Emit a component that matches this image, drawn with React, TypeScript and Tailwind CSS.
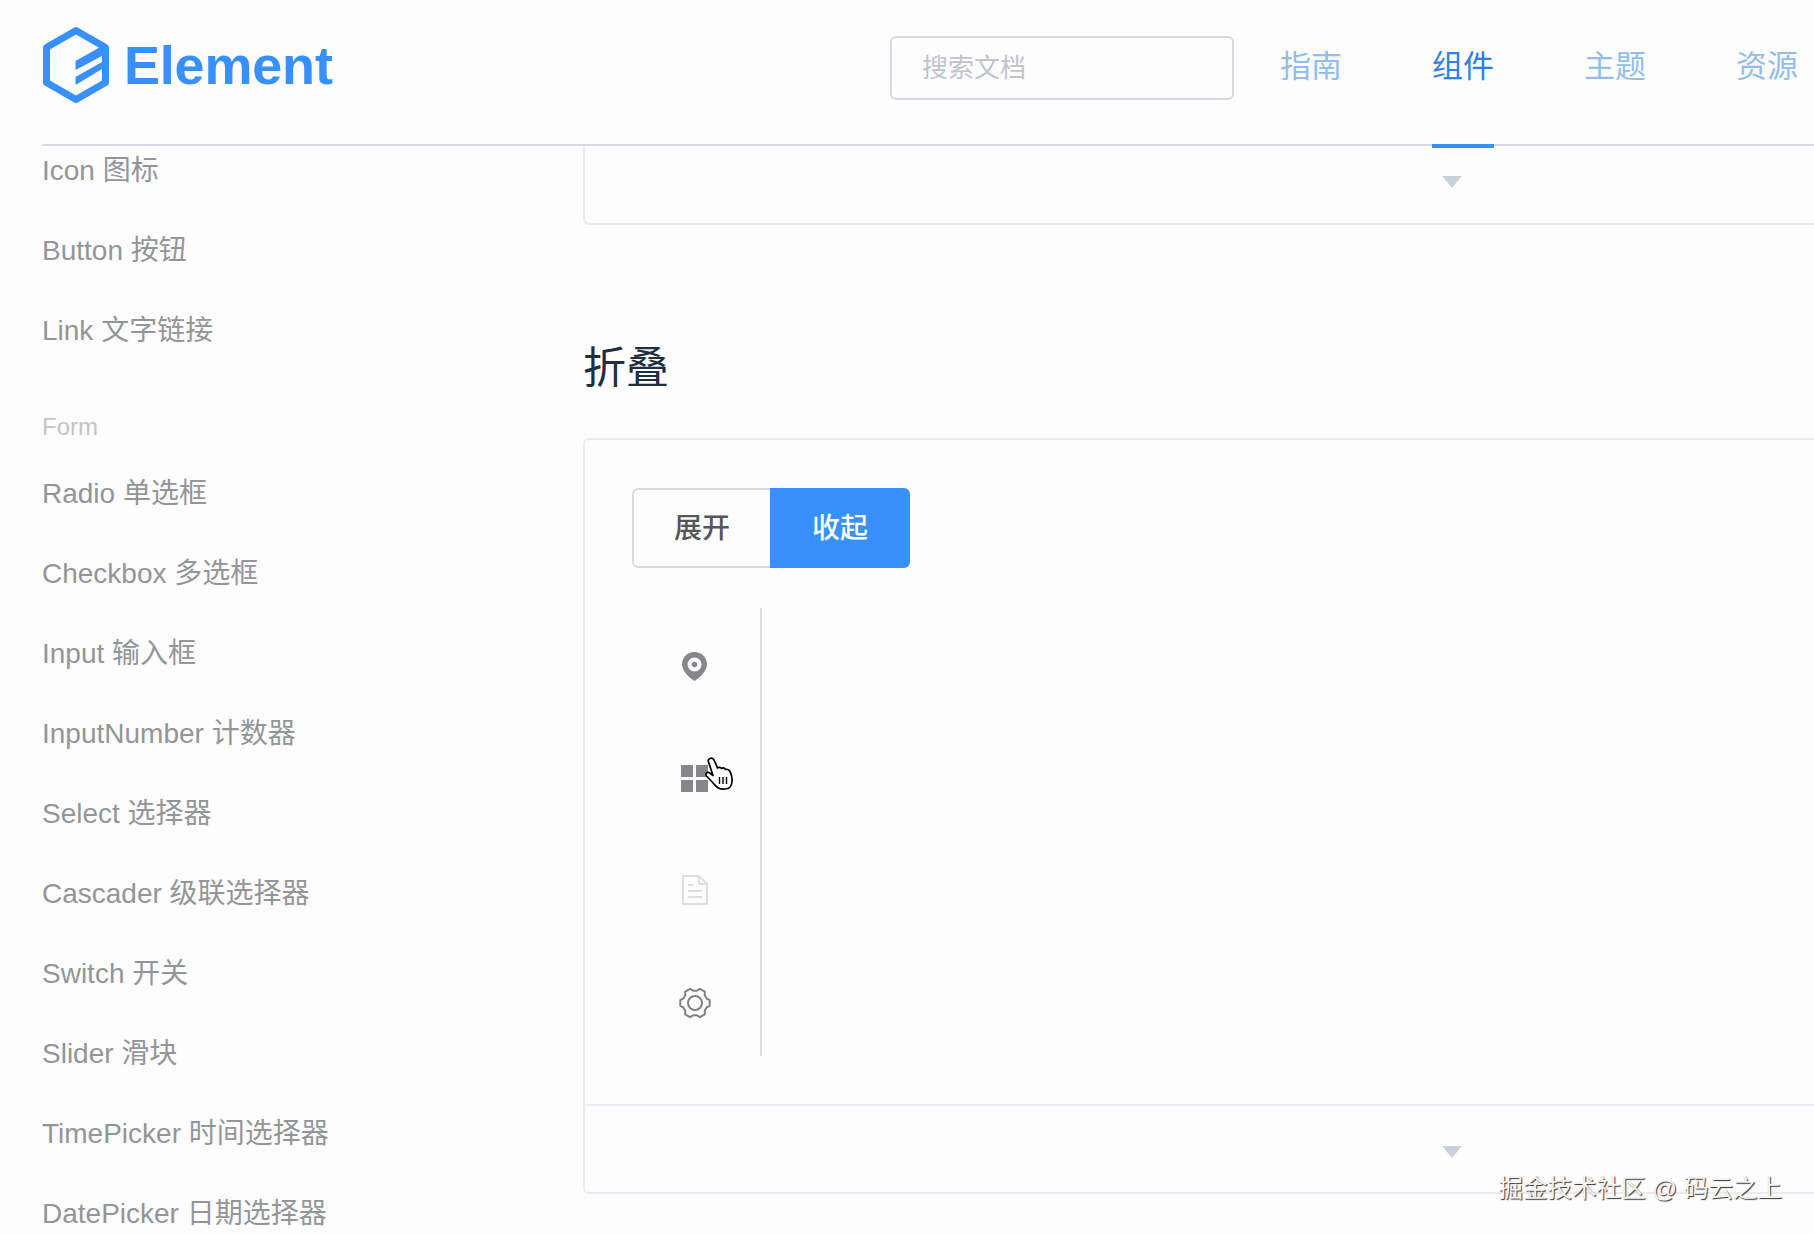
type NavRow = { label: string; group?: boolean };

const SIDE_ROWS: NavRow[] = [
  { label: "Icon 图标" },
  { label: "Button 按钮" },
  { label: "Link 文字链接" },
  { label: "Form", group: true },
  { label: "Radio 单选框" },
  { label: "Checkbox 多选框" },
  { label: "Input 输入框" },
  { label: "InputNumber 计数器" },
  { label: "Select 选择器" },
  { label: "Cascader 级联选择器" },
  { label: "Switch 开关" },
  { label: "Slider 滑块" },
  { label: "TimePicker 时间选择器" },
  { label: "DatePicker 日期选择器" },
];

const TOP_NAV = ["指南", "组件", "主题", "资源"];

function Logo() {
  return (
    <svg viewBox="0 0 68 78" className="h-[78px] w-[68px]">
      <path
        d="M34 4.5 L63.5 21.5 V56.5 L34 73.5 L4.5 56.5 V21.5 Z"
        fill="none"
        stroke="#3790fb"
        strokeWidth="7"
        strokeLinejoin="round"
      />
      <path d="M33.5 35 L60 20 V30 L33.5 44 Z" fill="#3790fb" />
      <path d="M33.5 51 L60 36 V43 L33.5 59 Z" fill="#3790fb" />
    </svg>
  );
}

function CardFooter({ top }: { top?: boolean }) {
  return (
    <div className={`flex h-[88px] items-center justify-center pt-[6px] ${top ? "border-t-2 border-[#eceef3]" : ""}`}>
      <div className="h-0 w-0 border-x-[10px] border-t-[12px] border-x-transparent border-t-[#c9cfdb]" />
    </div>
  );
}

function PinIcon() {
  return (
    <svg viewBox="0 0 25 29" className="h-[29px] w-[25px]">
      <path
        fillRule="evenodd"
        d="M12.5 0 C19.4 0 25 5.4 25 12.2 C25 18.6 18.5 25 12.5 29 C6.5 25 0 18.6 0 12.2 C0 5.4 5.6 0 12.5 0 Z M12.5 5.5 A7 7 0 1 0 12.5 19.5 A7 7 0 1 0 12.5 5.5 Z"
        fill="#85878b"
      />
      <circle cx="12.5" cy="12.5" r="2.8" fill="#85878b" />
    </svg>
  );
}

function GridIcon() {
  return (
    <div className="grid grid-cols-2 gap-[3px]">
      <div className="h-3 w-3 bg-[#85878b]" />
      <div className="h-3 w-3 bg-[#85878b]" />
      <div className="h-3 w-3 bg-[#85878b]" />
      <div className="h-3 w-3 bg-[#85878b]" />
    </div>
  );
}

function DocIcon() {
  return (
    <svg viewBox="0 0 26 30" className="h-[30px] w-[26px]" fill="none" stroke="#dedfe1" strokeWidth="2">
      <path d="M1 1 H17 L25 9 V29 H1 Z" strokeLinejoin="round" />
      <path d="M17 1 V9 H25" strokeLinejoin="round" />
      <path d="M6 10 H11 M6 16 H20 M6 22 H20" />
    </svg>
  );
}

// six teeth, flat tips
function gearPoints() {
  const pts: string[] = [];
  for (let i = 0; i < 6; i++) {
    const a = i * 60;
    for (const [d, r] of [[-21, 12.5], [-11, 15], [11, 15], [21, 12.5]]) {
      const t = ((a + d) * Math.PI) / 180;
      pts.push(`${(16 + r * Math.cos(t)).toFixed(2)},${(16 + r * Math.sin(t)).toFixed(2)}`);
    }
  }
  return pts.join(" ");
}

function GearIcon() {
  return (
    <svg viewBox="0 0 32 32" className="h-8 w-8" fill="none" stroke="#808285" strokeWidth="2">
      <polygon points={gearPoints()} strokeLinejoin="round" />
      <circle cx="16" cy="16" r="7" />
    </svg>
  );
}

function HandCursor() {
  return (
    <svg viewBox="0 0 30 33" className="absolute top-[37px] left-[72px] h-[33px] w-[30px]">
      <path
        d="M6 1.5 C8 0.5 9.5 1.5 10.5 4 L13.5 11 C14.5 10 16.5 10 17.5 11.5 C19 10.5 20.5 11 21.5 12.5 C23 12 25 12.5 26 14.5 C27.5 17.5 28.5 21 28 25 C27.5 29 25 32 21 32 C16 32.5 13 31 10.5 27.5 L2.5 19 C1 17 2.5 15 5 15.5 L9 18.5 L4.5 5 C4 3.5 4.5 2 6 1.5 Z"
        fill="#fff"
        stroke="#000"
        strokeWidth="1.7"
        strokeLinejoin="round"
      />
      <path d="M15.5 20 V27 M19 20 V27 M22.5 20 V27" stroke="#000" strokeWidth="1.4" />
    </svg>
  );
}

export default function App() {
  return (
    <div className="relative flex h-screen w-full flex-col overflow-hidden bg-[#fdfdfe] font-['Liberation_Sans','Noto_Sans_CJK_SC',sans-serif]">
      {/* Header */}
      <header className="ml-[42px] flex h-[146px] flex-none border-b-2 border-[#d8d9e2] pr-[16px]">
        <div className="mb-[14px] flex items-center gap-[14px]">
          <Logo />
          <span className="text-[54px] font-bold leading-none tracking-[-0.2px] text-[#3790fb]">Element</span>
        </div>
        <input
          placeholder="搜索文档"
          className="mt-[36px] ml-auto h-[64px] w-[344px] rounded-md border-2 border-[#d8dadf] bg-transparent pl-[30px] text-[26px] outline-none placeholder:text-[#c0c4cc]"
        />
        <nav className="ml-[46px] flex gap-[90px]">
          {TOP_NAV.map((item) => (
            <div
              key={item}
              className={
                item === "组件"
                  ? "-mb-[2px] h-[148px] w-[62px] border-b-4 border-[#3790fb] pt-[43px] text-[31px] leading-[48px] whitespace-nowrap text-[#2d80e4]"
                  : "h-[146px] w-[62px] pt-[43px] text-[31px] leading-[48px] whitespace-nowrap text-[#93bdee]"
              }
            >
              {item}
            </div>
          ))}
        </nav>
      </header>

      <div className="flex min-h-0 flex-1">
        {/* Sidebar */}
        <aside className="ml-[42px] w-[541px] flex-none overflow-hidden">
          <div className="-mt-[15px]">
            {SIDE_ROWS.map((row) =>
              row.group ? (
                <div key={row.label} className="h-[83px] pt-[30px] text-[24px] leading-[52px] text-[#c4c4c6]">
                  {row.label}
                </div>
              ) : (
                <div key={row.label} className="h-[80px] text-[28px] leading-[80px] text-[#949597]">
                  {row.label}
                </div>
              ),
            )}
          </div>
        </aside>

        {/* Content */}
        <main className="min-w-0 flex-1 overflow-hidden">
          <div className="-mt-[11px] w-[1738px]">
            <div className="rounded-b-md border-x-2 border-b-2 border-[#e9ebf0]">
              <CardFooter />
            </div>
            <h2 className="mt-[113px] mb-[40px] text-[43px] font-normal leading-[60px] text-[#1f2f3d]">折叠</h2>
            <div className="rounded-md border-2 border-[#e9ebf0]">
              <div className="py-12 pl-[47px]">
                <div className="flex h-[80px]">
                  <div className="flex w-[138px] items-center justify-center rounded-l-md border-2 border-r-0 border-[#d9dadd] pt-[2px] text-[28px] font-medium text-[#555659]">
                    展开
                  </div>
                  <div className="flex w-[140px] items-center justify-center rounded-r-md bg-[#3790fb] pt-[2px] text-[28px] font-medium text-white">
                    收起
                  </div>
                </div>
                <div className="mt-10 w-[130px] border-r-2 border-[#dcdde0]">
                  <div className="flex h-[112px] items-center pt-[5px] pl-[50px]">
                    <PinIcon />
                  </div>
                  <div className="relative flex h-[112px] items-center pt-[5px] pl-[49px]">
                    <GridIcon />
                    <HandCursor />
                  </div>
                  <div className="flex h-[112px] items-center pt-[4px] pl-[50px]">
                    <DocIcon />
                  </div>
                  <div className="flex h-[112px] items-center pt-[5px] pl-[47px]">
                    <GearIcon />
                  </div>
                </div>
              </div>
              <CardFooter top />
            </div>
          </div>
        </main>
      </div>

      {/* Watermark */}
      <div className="absolute right-[32px] bottom-[30px] text-[24.5px] leading-[30px] text-[#f4f4f4] [text-shadow:1px_1px_1px_#333]">
        掘金技术社区 @ 码云之上
      </div>
    </div>
  );
}
